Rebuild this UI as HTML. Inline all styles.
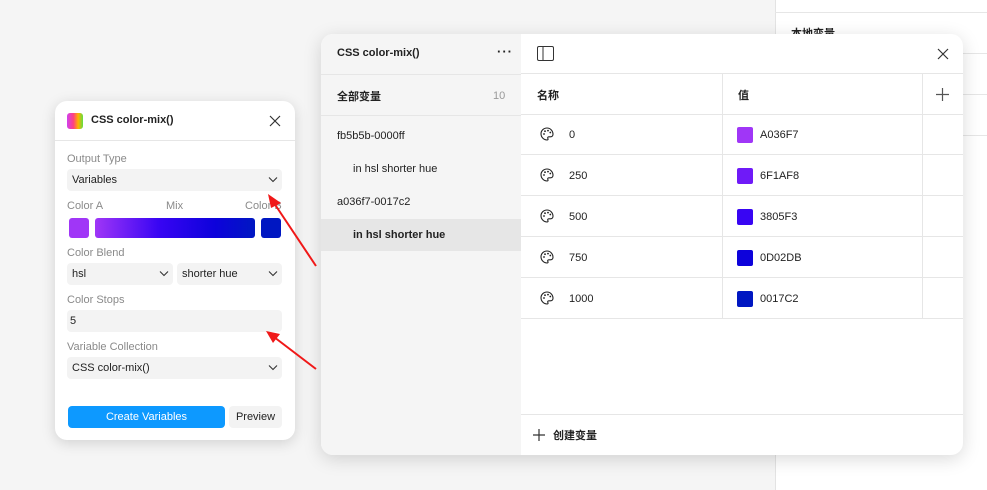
<!DOCTYPE html>
<html><head><meta charset="utf-8"><style>
*{box-sizing:border-box;margin:0;padding:0}
body{width:987px;height:490px;overflow:hidden;background:#f5f5f5;font-family:"Liberation Sans","Noto Sans CJK SC",sans-serif;font-size:11px;color:#222;position:relative}
.a{position:absolute}
.hl{position:absolute;height:1px;background:#e6e6e6}
.vl{position:absolute;width:1px;background:#e6e6e6}
.lbl{position:absolute;left:12px;color:#8a8a8a;font-size:11px}
.fld{position:absolute;background:#f3f3f3;border-radius:4px;height:22px;line-height:22px;padding-left:5px;font-size:11px;color:#222}
.chev{position:absolute;right:4px;top:7px;width:10px;height:7px}
.sw{position:absolute;width:16px;height:16px;border-radius:2px;left:216px;top:13px}
.pal{position:absolute;left:19px;top:13px}
</style></head><body>
<div class="a" style="left:775px;top:0;width:212px;height:490px;background:#fff;border-left:1px solid #e3e3e3"></div>
<div class="hl" style="left:775px;width:212px;top:12px"></div>
<div class="hl" style="left:775px;width:212px;top:53px"></div>
<div class="hl" style="left:775px;width:212px;top:94px"></div>
<div class="hl" style="left:775px;width:212px;top:135px"></div>
<div class="a" style="left:791px;top:25px;font-size:11px;font-weight:bold">本地变量</div>

<div class="a" style="left:321px;top:34px;width:642px;height:421px;background:#fff;border-radius:12px;overflow:hidden;box-shadow:0 4px 18px rgba(0,0,0,.15)">
  <div class="a" style="left:0;top:0;width:200px;height:421px;background:#f5f5f5"></div>
  <div class="a" style="left:16px;top:13px;font-weight:bold;font-size:11px">CSS color-mix()</div>
  <div class="a" style="left:176px;top:10px;font-weight:bold;font-size:13px;letter-spacing:1px">···</div>
  <div class="hl" style="left:0;width:200px;top:40px"></div>
  <div class="a" style="left:16px;top:54px;font-weight:bold">全部变量</div>
  <div class="a" style="left:172px;top:56px;color:#999">10</div>
  <div class="hl" style="left:0;width:200px;top:81px"></div>
  <div class="a" style="left:16px;top:96px">fb5b5b-0000ff</div>
  <div class="a" style="left:32px;top:129px">in hsl shorter hue</div>
  <div class="a" style="left:16px;top:162px">a036f7-0017c2</div>
  <div class="a" style="left:0;top:185px;width:200px;height:32px;background:#e6e6e6"></div>
  <div class="a" style="left:32px;top:195px;font-weight:bold">in hsl shorter hue</div>

  <svg class="a" style="left:216px;top:12px" width="17" height="15" viewBox="0 0 17 15"><rect x="0.5" y="0.5" width="16" height="14" rx="1.5" fill="none" stroke="#333"/><line x1="6" y1="1" x2="6" y2="14" stroke="#333"/></svg>
  <svg class="a" style="left:616px;top:14px" width="12" height="12"><path d="M1 1L11 11M11 1L1 11" stroke="#333" stroke-width="1.2"/></svg>
  <div class="hl" style="left:200px;width:442px;top:39px"></div>
  <div class="a" style="left:200px;top:40px;width:442px;height:245px">
    <div class="vl" style="left:201px;top:0;height:245px"></div>
    <div class="vl" style="left:401px;top:0;height:245px"></div>
    <div class="a" style="left:16px;top:13px;font-weight:bold">名称</div>
    <div class="a" style="left:217px;top:13px;font-weight:bold">值</div>
    <svg class="a" style="left:415px;top:14px" width="13" height="13"><path d="M6.5 0V13M0 6.5H13" stroke="#555" stroke-width="1.2"/></svg>
    <div class="hl" style="left:0;width:442px;top:40px"></div>
  </div>
  <div id="rows"></div>
  <div class="hl" style="left:200px;width:442px;top:380px"></div>
  <svg class="a" style="left:212px;top:395px" width="12" height="12"><path d="M6 0V12M0 6H12" stroke="#333" stroke-width="1.2"/></svg>
  <div class="a" style="left:232px;top:393px;font-weight:bold">创建变量</div>
</div>

<div class="a" style="left:55px;top:101px;width:240px;height:339px;background:#fff;border-radius:12px;box-shadow:0 3px 14px rgba(0,0,0,.15)">
  <div class="a" style="left:12px;top:12px;width:16px;height:16px;border-radius:3px;background:linear-gradient(90deg,#d040f0,#ff4080 40%,#ffb000 70%,#60e040)"></div>
  <div class="a" style="left:36px;top:13px;font-weight:bold;font-size:11px">CSS color-mix()</div>
  <svg class="a" style="left:214px;top:14px" width="12" height="12"><path d="M1 1L11 11M11 1L1 11" stroke="#333" stroke-width="1.2"/></svg>
  <div class="hl" style="left:0;width:240px;top:39px"></div>
  <div class="lbl" style="top:52px">Output Type</div>
  <div class="fld" style="left:12px;top:68px;width:215px">Variables<svg class="chev" viewBox="0 0 10 7"><path d="M1 1.5L5 5.5L9 1.5" fill="none" stroke="#333" stroke-width="1.1"/></svg></div>
  <div class="lbl" style="top:99px">Color A</div>
  <div class="a" style="left:111px;top:99px;color:#8a8a8a">Mix</div>
  <div class="a" style="left:190px;top:99px;color:#8a8a8a">Color B</div>
  <div class="a" style="left:14px;top:117px;width:20px;height:20px;border-radius:3px;background:#a036f7"></div>
  <div class="a" style="left:40px;top:117px;width:160px;height:20px;border-radius:3px;background:linear-gradient(90deg,#a036f7,#3805f3 40%,#0d02db 75%,#0017c2)"></div>
  <div class="a" style="left:206px;top:117px;width:20px;height:20px;border-radius:3px;background:#0017c2"></div>
  <div class="lbl" style="top:146px">Color Blend</div>
  <div class="fld" style="left:12px;top:162px;width:106px">hsl<svg class="chev" viewBox="0 0 10 7"><path d="M1 1.5L5 5.5L9 1.5" fill="none" stroke="#333" stroke-width="1.1"/></svg></div>
  <div class="fld" style="left:122px;top:162px;width:105px">shorter hue<svg class="chev" viewBox="0 0 10 7"><path d="M1 1.5L5 5.5L9 1.5" fill="none" stroke="#333" stroke-width="1.1"/></svg></div>
  <div class="lbl" style="top:193px">Color Stops</div>
  <div class="fld" style="left:12px;top:209px;width:215px;padding-left:3px">5</div>
  <div class="lbl" style="top:240px">Variable Collection</div>
  <div class="fld" style="left:12px;top:256px;width:215px">CSS color-mix()<svg class="chev" viewBox="0 0 10 7"><path d="M1 1.5L5 5.5L9 1.5" fill="none" stroke="#333" stroke-width="1.1"/></svg></div>
  <div class="a" style="left:13px;top:305px;width:157px;height:22px;border-radius:4px;background:#0d99ff;color:#fff;text-align:center;line-height:22px">Create Variables</div>
  <div class="a" style="left:174px;top:305px;width:53px;height:22px;border-radius:4px;background:#f3f3f3;text-align:center;line-height:22px">Preview</div>
</div>

<svg class="a" style="left:0;top:0" width="987" height="490">
  <line x1="316" y1="266" x2="274" y2="203" stroke="#f01818" stroke-width="2"/>
  <path d="M268 194L281 203L271 208Z" fill="#f01818"/>
  <line x1="316" y1="369" x2="274" y2="337" stroke="#f01818" stroke-width="2"/>
  <path d="M266 331L280 334L273 343Z" fill="#f01818"/>
</svg>

<script>
var d=[["0","A036F7","#a036f7"],["250","6F1AF8","#6f1af8"],["500","3805F3","#3805f3"],["750","0D02DB","#0d02db"],["1000","0017C2","#0017c2"]];
var h="";
d.forEach(function(r,i){var t=80+i*41;
h+='<div class="a" style="left:200px;top:'+t+'px;width:442px;height:41px;border-bottom:1px solid #e6e6e6">'+
'<div class="vl" style="left:201px;top:0;height:41px"></div><div class="vl" style="left:401px;top:0;height:41px"></div>'+
'<svg class="pal" width="14" height="14" viewBox="0 0 14 14"><path d="M7 1C3.7 1 1 3.6 1 6.8C1 10.2 3.8 13 7 13C8 13 8.3 12.3 7.9 11.6C7.4 10.8 7.8 9.8 8.8 9.8H10.5C12 9.8 13 8.7 13 7.2C13 3.8 10.3 1 7 1Z" fill="none" stroke="#222" stroke-width="1.1"/><circle cx="4" cy="7" r=".9" fill="#222"/><circle cx="5" cy="4.2" r=".9" fill="#222"/><circle cx="8" cy="3.6" r=".9" fill="#222"/><circle cx="10.3" cy="5.5" r=".9" fill="#222"/></svg>'+
'<div class="a" style="left:48px;top:15px">'+r[0]+'</div>'+
'<div class="sw" style="background:'+r[2]+'"></div>'+
'<div class="a" style="left:239px;top:15px">'+r[1]+'</div></div>';});
document.getElementById("rows").innerHTML=h;
</script>
</body></html>
